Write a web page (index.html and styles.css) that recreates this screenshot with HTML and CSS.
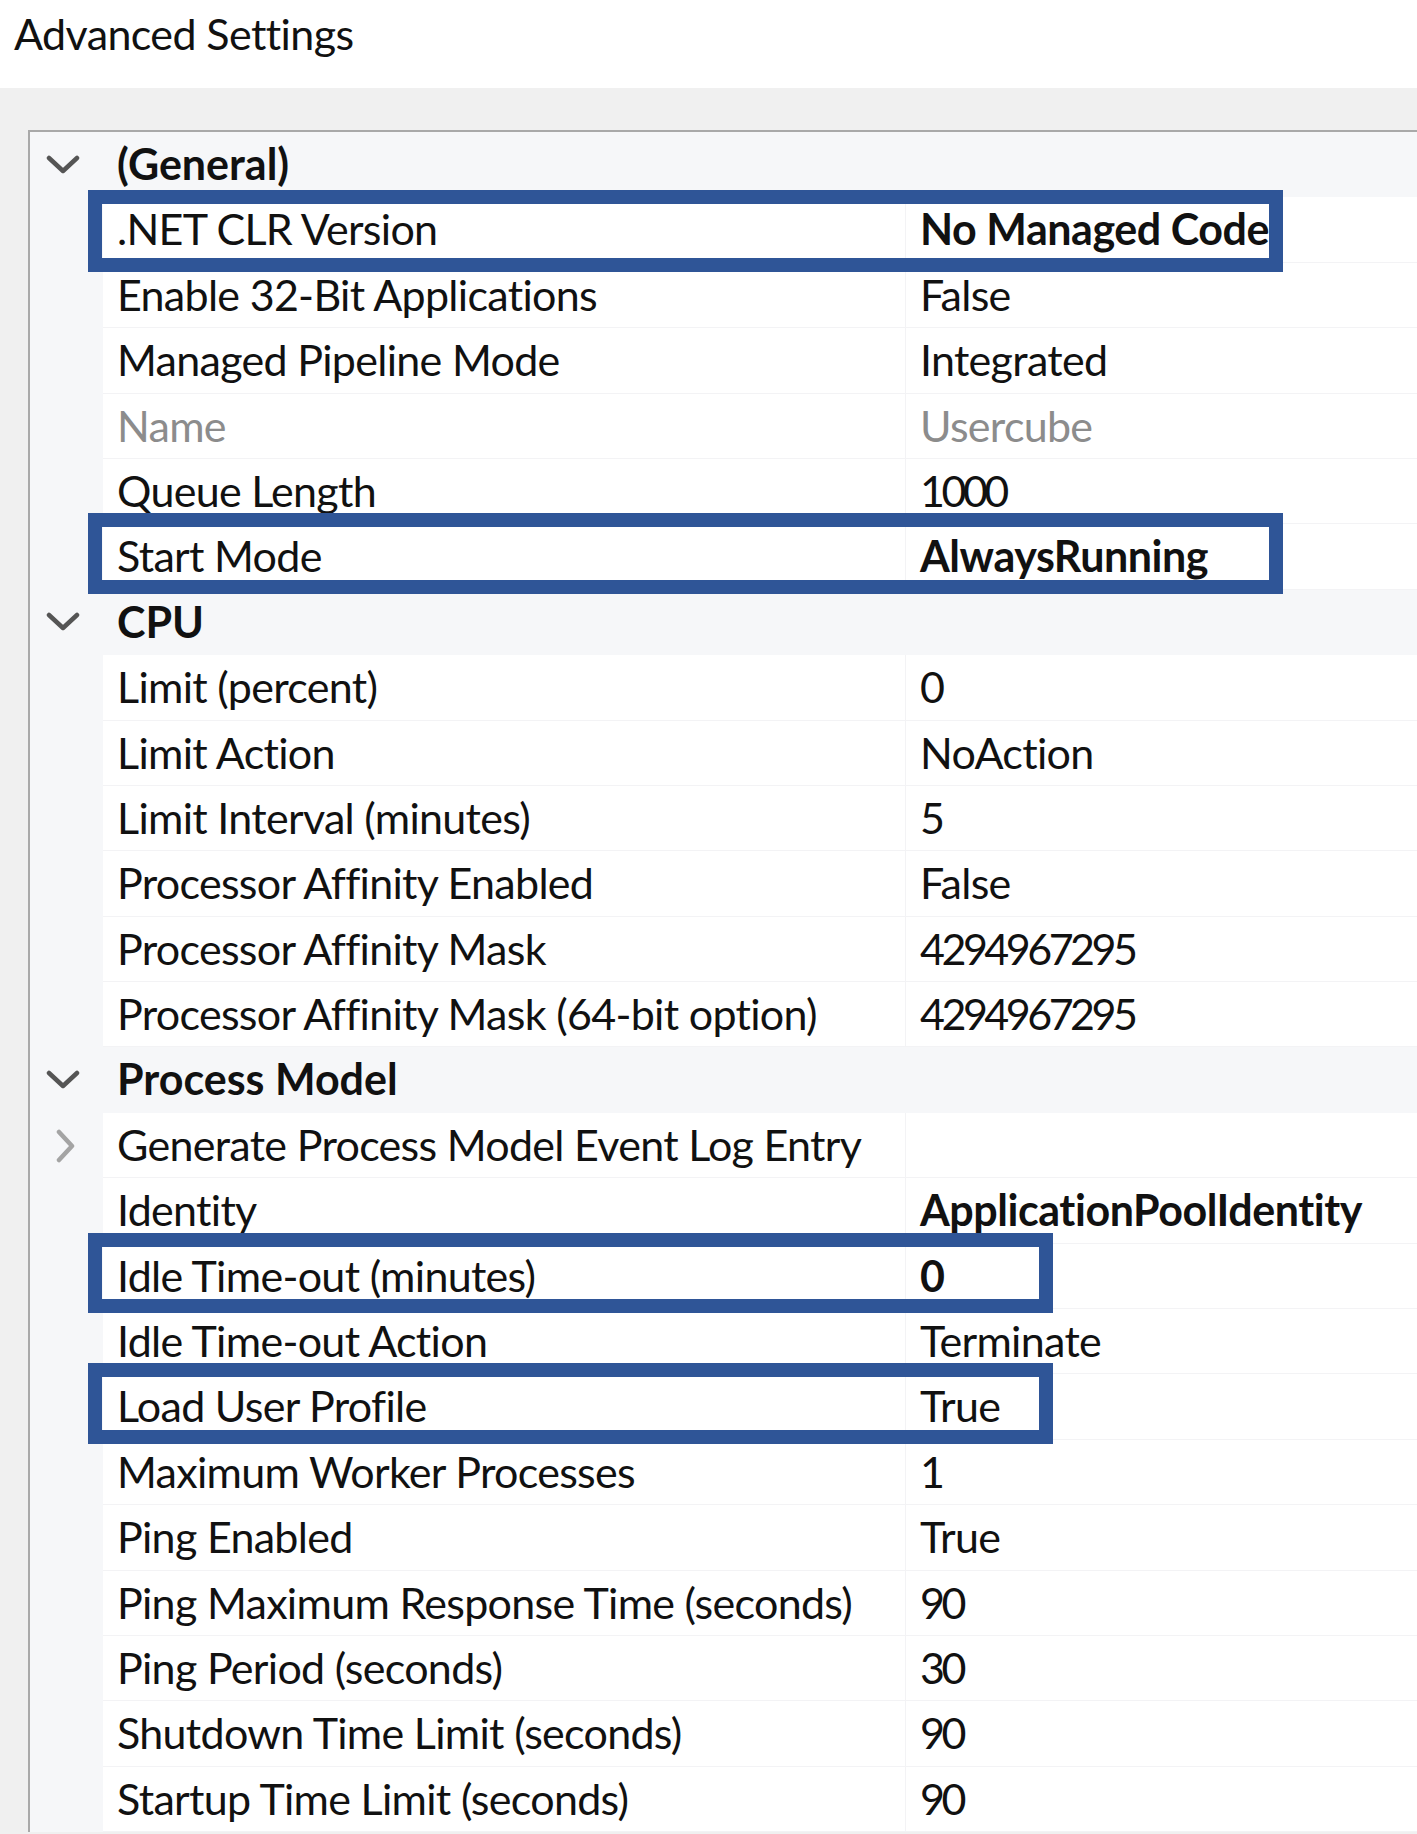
FILE: index.html
```html
<!DOCTYPE html>
<html lang="en">
<head>
    <meta charset="UTF-8">
    <title>Advanced Settings</title>
    <link rel="stylesheet" href="styles.css">
</head>
<body>
    <div class="title">Advanced Settings</div>

    <div class="frame">
        <div class="grid">
            <!-- (General) -->
            <div class="row cat">
                <span class="gutter"><svg class="chev" width="34" height="22" viewBox="0 0 34 22"><path d="M3 4 L17 17 L31 4" /></svg></span>
                <span class="name">(General)</span>
            </div>
            <div class="row">
                <span class="gutter"></span>
                <span class="name">.NET CLR Version</span>
                <span class="value strong">No Managed Code</span>
                <span class="mark mark-wide mark-first"></span>
            </div>
            <div class="row">
                <span class="gutter"></span>
                <span class="name">Enable 32-Bit Applications</span>
                <span class="value">False</span>
            </div>
            <div class="row">
                <span class="gutter"></span>
                <span class="name">Managed Pipeline Mode</span>
                <span class="value">Integrated</span>
            </div>
            <div class="row muted">
                <span class="gutter"></span>
                <span class="name">Name</span>
                <span class="value">Usercube</span>
            </div>
            <div class="row">
                <span class="gutter"></span>
                <span class="name">Queue Length</span>
                <span class="value num">1000</span>
            </div>
            <div class="row">
                <span class="gutter"></span>
                <span class="name">Start Mode</span>
                <span class="value strong">AlwaysRunning</span>
                <span class="mark mark-wide"></span>
            </div>

            <!-- CPU -->
            <div class="row cat">
                <span class="gutter"><svg class="chev" width="34" height="22" viewBox="0 0 34 22"><path d="M3 4 L17 17 L31 4" /></svg></span>
                <span class="name">CPU</span>
            </div>
            <div class="row">
                <span class="gutter"></span>
                <span class="name">Limit (percent)</span>
                <span class="value num">0</span>
            </div>
            <div class="row">
                <span class="gutter"></span>
                <span class="name">Limit Action</span>
                <span class="value">NoAction</span>
            </div>
            <div class="row">
                <span class="gutter"></span>
                <span class="name">Limit Interval (minutes)</span>
                <span class="value num">5</span>
            </div>
            <div class="row">
                <span class="gutter"></span>
                <span class="name">Processor Affinity Enabled</span>
                <span class="value">False</span>
            </div>
            <div class="row">
                <span class="gutter"></span>
                <span class="name">Processor Affinity Mask</span>
                <span class="value num">4294967295</span>
            </div>
            <div class="row">
                <span class="gutter"></span>
                <span class="name">Processor Affinity Mask (64-bit option)</span>
                <span class="value num">4294967295</span>
            </div>

            <!-- Process Model -->
            <div class="row cat">
                <span class="gutter"><svg class="chev" width="34" height="22" viewBox="0 0 34 22"><path d="M3 4 L17 17 L31 4" /></svg></span>
                <span class="name">Process Model</span>
            </div>
            <div class="row">
                <span class="gutter"><svg class="chev-right" width="24" height="34" viewBox="0 0 24 34"><path d="M5 3 L18 17 L5 31" /></svg></span>
                <span class="name">Generate Process Model Event Log Entry</span>
                <span class="value"></span>
            </div>
            <div class="row">
                <span class="gutter"></span>
                <span class="name">Identity</span>
                <span class="value strong">ApplicationPoolIdentity</span>
            </div>
            <div class="row">
                <span class="gutter"></span>
                <span class="name">Idle Time-out (minutes)</span>
                <span class="value strong">0</span>
                <span class="mark mark-narrow"></span>
            </div>
            <div class="row">
                <span class="gutter"></span>
                <span class="name">Idle Time-out Action</span>
                <span class="value">Terminate</span>
            </div>
            <div class="row">
                <span class="gutter"></span>
                <span class="name">Load User Profile</span>
                <span class="value">True</span>
                <span class="mark mark-narrow"></span>
            </div>
            <div class="row">
                <span class="gutter"></span>
                <span class="name">Maximum Worker Processes</span>
                <span class="value num">1</span>
            </div>
            <div class="row">
                <span class="gutter"></span>
                <span class="name">Ping Enabled</span>
                <span class="value">True</span>
            </div>
            <div class="row">
                <span class="gutter"></span>
                <span class="name">Ping Maximum Response Time (seconds)</span>
                <span class="value num">90</span>
            </div>
            <div class="row">
                <span class="gutter"></span>
                <span class="name">Ping Period (seconds)</span>
                <span class="value num">30</span>
            </div>
            <div class="row">
                <span class="gutter"></span>
                <span class="name">Shutdown Time Limit (seconds)</span>
                <span class="value num">90</span>
            </div>
            <div class="row">
                <span class="gutter"></span>
                <span class="name">Startup Time Limit (seconds)</span>
                <span class="value num">90</span>
            </div>
        </div>
    </div>
</body>
</html>
```

FILE: styles.css
```css
/* Property grid dialog */
body, html {
    margin: 0;
    font-family: Lato, "Open Sans", sans-serif;
    color: #111;
    background-color: #f0f0f0;
}

.title {
    height: 88px;
    line-height: 67px;
    padding-left: 14px;
    font-size: 43px;
    letter-spacing: -0.6px;
    background-color: #fff;
}

.frame {
    padding: 42px 0 0 28px;
    background-color: #f0f0f0;
}

.grid {
    border-top: 2px solid #a9a9a9;
    border-left: 2px solid #a9a9a9;
    background-color: #f6f7f9;
    font-size: 43px;
}

.row {
    position: relative;
    display: grid;
    grid-template-columns: 73px 802px 1fr;
    height: 65.4px;
    line-height: 63px;
}

.gutter {
    display: flex;
    align-items: center;
    padding-left: 16px;
    background-color: #f6f7f9;
}

.name,
.value {
    padding-left: 14px;
    white-space: nowrap;
    letter-spacing: -0.7px;
    background-color: #fff;
    border-bottom: 1px solid #f3f3f5;
}

.value {
    border-left: 1px solid #f3f3f5;
}

.cat .name {
    grid-column: 2 / -1;
    font-weight: bold;
    letter-spacing: 0;
    background-color: #f6f7f9;
    border-bottom: none;
}

.strong {
    font-weight: bold;
    letter-spacing: -0.45px;
}

.num {
    letter-spacing: -3.5px;
}

.muted .name,
.muted .value {
    color: #8c8c8c;
}

.chev path,
.chev-right path {
    fill: none;
    stroke-width: 4.5;
    stroke-linecap: round;
    stroke-linejoin: round;
}

.chev path {
    stroke: #555;
}

.chev-right {
    margin-left: 8px;
}

.chev-right path {
    stroke: #a4a4a4;
}

/* Blue highlight boxes */
.mark {
    position: absolute;
    left: 58px;
    top: -11px;
    bottom: -4px;
    box-sizing: border-box;
    border: 14px solid #2f5597;
    z-index: 2;
}

.mark-first {
    top: -7px;
    bottom: -9px;
}

.mark-wide {
    width: 1195px;
}

.mark-narrow {
    width: 965px;
}
```
